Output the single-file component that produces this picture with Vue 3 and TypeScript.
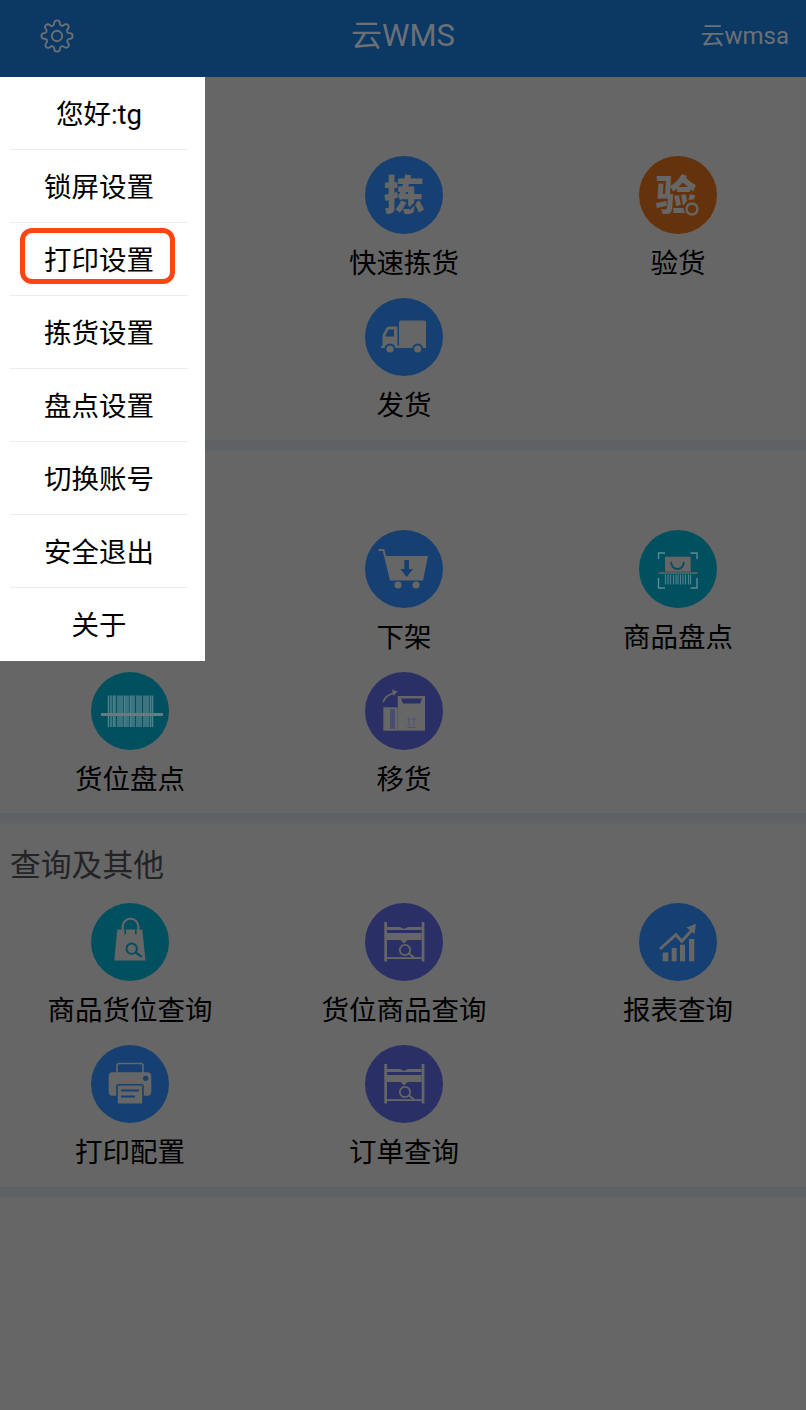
<script setup lang="ts">
interface Item { label: string; icon: string; color: string }
interface Section { title: string; items: Item[] }

const BLUE = '#154071'
const ORANGE = '#64320b'
const TEAL = '#00505f'
const INDIGO = '#2a3066'
// Cells that the open menu covers in the reference stay empty.
const HIDDEN: Item = { label: '', icon: '', color: 'transparent' }

const sections: Section[] = [
  {
    title: '',
    items: [
      HIDDEN,
      { label: '快速拣货', icon: 'pick', color: BLUE },
      { label: '验货', icon: 'check', color: ORANGE },
      HIDDEN,
      { label: '发货', icon: 'truck', color: BLUE },
    ],
  },
  {
    title: '',
    items: [
      HIDDEN,
      { label: '下架', icon: 'cart', color: BLUE },
      { label: '商品盘点', icon: 'scan', color: TEAL },
      { label: '货位盘点', icon: 'barcode', color: TEAL },
      { label: '移货', icon: 'move', color: INDIGO },
    ],
  },
  {
    title: '查询及其他',
    items: [
      { label: '商品货位查询', icon: 'bag', color: TEAL },
      { label: '货位商品查询', icon: 'shelf', color: INDIGO },
      { label: '报表查询', icon: 'chart', color: BLUE },
      { label: '打印配置', icon: 'printer', color: BLUE },
      { label: '订单查询', icon: 'shelf', color: INDIGO },
    ],
  },
]

const menu: string[] = ['您好:tg', '锁屏设置', '打印设置', '拣货设置', '盘点设置', '切换账号', '安全退出', '关于']
const bars: number[] = [17.5, 20, 22.5, 24, 27, 29, 31, 33.5, 35, 37, 39.5, 41, 43, 46, 48, 50, 53, 55, 57, 59.5, 61.5]
</script>

<template>
  <div class="page">
    <header class="top">
      <svg class="gear" viewBox="0 0 24 24" fill="none" stroke="#6b7076" stroke-width="1.3" stroke-linejoin="round">
        <circle cx="12" cy="12" r="3.7" />
        <path d="M19.4 15a1.65 1.65 0 0 0 .33 1.82l.06.06a2 2 0 1 1-2.83 2.83l-.06-.06a1.65 1.65 0 0 0-2.82 1.17V21a2 2 0 0 1-4 0v-.09a1.65 1.65 0 0 0-2.82-1.17l-.06.06a2 2 0 1 1-2.83-2.83l.06-.06A1.65 1.65 0 0 0 3.09 14H3a2 2 0 0 1 0-4h.09a1.65 1.65 0 0 0 1.17-2.82l-.06-.06a2 2 0 1 1 2.83-2.83l.06.06A1.65 1.65 0 0 0 10 3.09V3a2 2 0 0 1 4 0v.09a1.65 1.65 0 0 0 2.82 1.17l.06-.06a2 2 0 1 1 2.83 2.83l-.06.06A1.65 1.65 0 0 0 20.91 10H21a2 2 0 0 1 0 4h-.09a1.65 1.65 0 0 0-1.51 1z" />
      </svg>
      <span class="title">云WMS</span>
      <span class="user">云wmsa</span>
    </header>

    <section v-for="(s, si) in sections" :key="si" class="section">
      <h2 class="section-title">{{ s.title }}</h2>
      <div class="grid">
        <div v-for="(it, ii) in s.items" :key="ii" class="cell">
          <svg v-if="it.icon" class="icon" viewBox="0 0 78 78">
            <circle cx="39" cy="39" r="39" :fill="it.color" />

            <g v-if="it.icon === 'pick'">
              <text x="39" y="54" class="glyph" text-anchor="middle">拣</text>
              <path d="M41 49l4 3.5 6-6.5" fill="none" :stroke="it.color" stroke-width="2.2" />
            </g>

            <g v-else-if="it.icon === 'check'">
              <text x="37" y="54" class="glyph" text-anchor="middle">验</text>
              <circle cx="53" cy="52" r="8.5" :fill="it.color" />
              <circle cx="53" cy="53" r="5.5" fill="none" stroke="#666" stroke-width="2.4" />
            </g>

            <g v-else-if="it.icon === 'truck'" fill="#666">
              <rect x="34" y="22.5" width="27" height="26.5" rx="2" />
              <path d="M32.5 28.5H24q-2 0-3 2L17.5 37v11H16v2h16.5z" />
              <path d="M23.5 31.5h5.5v7H20z" :fill="it.color" />
              <rect x="32" y="47.5" width="29" height="2.5" />
              <circle cx="25" cy="51" r="5.5" :fill="it.color" />
              <circle cx="25" cy="51" r="3.6" />
              <circle cx="52.7" cy="51" r="5.5" :fill="it.color" />
              <circle cx="52.7" cy="51" r="3.6" />
            </g>

            <g v-else-if="it.icon === 'cart'" fill="#666">
              <path d="M13.5 20H18.5L20 26" fill="none" stroke="#666" stroke-width="2" />
              <path d="M19 26H63L58 50.5H25z" />
              <circle cx="33" cy="55" r="3.6" />
              <circle cx="51" cy="55" r="3.6" />
              <path d="M39.3 30H44V39H47.9L41.7 47 35.3 39H39.3z" :fill="it.color" />
            </g>

            <g v-else-if="it.icon === 'scan'" fill="#666">
              <path d="M19.5 29V23H26M51.5 23H58V29M19.5 48V58H26M51.5 58H58V48" fill="none" stroke="#5d8a92" stroke-width="1.4" />
              <rect x="26" y="26.7" width="25.7" height="15" />
              <path d="M32 32q1 7 6.5 7t6.5-7" fill="none" :stroke="it.color" stroke-width="1.8" />
              <rect x="19.5" y="42.3" width="39" height="1.5" />
              <path d="M26.5 44.5v10M29 44.5v10M31.5 44.5v10M34.5 44.5v10M37 44.5v10M39 44.5v10M41.5 44.5v10M44 44.5v10M46.5 44.5v10M49.5 44.5v10M51.5 44.5v10" stroke="#4d8088" stroke-width="1.2" />
            </g>

            <g v-else-if="it.icon === 'barcode'">
              <path
                v-for="x in bars"
                :key="x"
                :d="`M${x} 23.5V55`"
                stroke="#4f8088"
                stroke-width="1.5"
              />
              <rect x="10" y="41" width="62" height="3" fill="#6a7a7e" />
            </g>

            <g v-else-if="it.icon === 'move'">
              <rect x="32.7" y="24" width="27.3" height="34.7" fill="#666" />
              <path d="M36 26.5H57L55 31.5H38z" :fill="it.color" />
              <rect x="18.3" y="35.3" width="14.4" height="23.4" fill="#666" />
              <rect x="25" y="37" width="5" height="20" fill="#4a4d73" />
              <path d="M18 30q3-7 11-9" fill="none" stroke="#666" stroke-width="1.8" />
              <path d="M27 17.5L32.5 19.5 28.5 24z" fill="#666" />
              <path d="M44 54v-8m-1.8 2l1.8-2 1.8 2M49 54v-8m-1.8 2l1.8-2 1.8 2M42 55.5h9" fill="none" stroke="#4f5278" stroke-width="1" />
            </g>

            <g v-else-if="it.icon === 'bag'">
              <path d="M31.7 28V23.5a7.8 7.8 0 0 1 15.6 0V28" fill="none" stroke="#666" stroke-width="2.2" />
              <path d="M26.3 26.5H51.3L54.5 57.5H23.3z" fill="#666" />
              <path d="M34.2 26.5v5M44.8 26.5v5" :stroke="it.color" stroke-width="1.6" />
              <circle cx="40.7" cy="45.7" r="5.2" fill="none" :stroke="it.color" stroke-width="2" />
              <path d="M44.7 49.5l6 4.3" :stroke="it.color" stroke-width="2.2" />
            </g>

            <g v-else-if="it.icon === 'shelf'" fill="#666">
              <rect x="19.3" y="19" width="2.7" height="39.5" />
              <rect x="56.7" y="19" width="2.7" height="39.5" />
              <path d="M22 24h13l4 2 4-2h13.7v3H22z" />
              <rect x="22" y="30" width="34.7" height="7" />
              <path d="M35.5 37h7L39 40.5z" />
              <rect x="22" y="54.2" width="34.7" height="1.8" />
              <circle cx="40" cy="47" r="5.2" fill="none" stroke="#666" stroke-width="1.8" />
              <path d="M44 50.5l5 4" fill="none" stroke="#666" stroke-width="1.8" />
            </g>

            <g v-else-if="it.icon === 'chart'" fill="#666">
              <rect x="23.7" y="49.5" width="5.6" height="8.8" />
              <rect x="32.7" y="45" width="5" height="13.3" />
              <rect x="41" y="41.7" width="5" height="16.6" />
              <rect x="50" y="36" width="5.3" height="22.3" />
              <path d="M21 46L37 31.7l5.7 6.6L54 26" fill="none" stroke="#666" stroke-width="3" />
              <path d="M47.5 24.5L57 20.7 55.5 31z" />
            </g>

            <g v-else-if="it.icon === 'printer'">
              <rect x="26" y="18.5" width="26" height="10" rx="2" fill="none" stroke="#666" stroke-width="1.6" />
              <rect x="17.7" y="27.3" width="42.6" height="23.4" rx="4" fill="#666" />
              <circle cx="54.7" cy="33.3" r="2.6" :fill="it.color" />
              <rect x="26" y="39.7" width="26" height="19.5" rx="1.5" fill="#666" :stroke="it.color" stroke-width="1.6" />
              <path d="M30 45.5h18M30 51.5h14" :stroke="it.color" stroke-width="1.8" />
            </g>
          </svg>
          <span v-if="it.label" class="label">{{ it.label }}</span>
        </div>
      </div>
    </section>

    <aside class="menu">
      <div v-for="(m, i) in menu" :key="m" class="menu-row">
        <span class="menu-text">{{ m }}</span>
        <span v-if="i === 2" class="mark"></span>
      </div>
    </aside>
  </div>
</template>

<style scoped>
.page {
  position: relative;
  width: 806px;
  height: 1410px;
  overflow: hidden;
  background: #666;
  font-family: Roboto, "Noto Sans CJK SC", sans-serif;
  color: #000;
}
.top {
  height: 77px;
  box-sizing: border-box;
  padding-bottom: 5px;
  background: #0c3964;
  color: #6b7076;
  display: grid;
  grid-template-columns: 1fr auto 1fr;
  align-items: center;
}
.gear { width: 34px; height: 34px; margin-left: 40px; }
.title { font-size: 31px; line-height: 38px; margin-bottom: 1px; }
.user { font-size: 24px; line-height: 30px; margin-bottom: 1px; margin-right: 17px; justify-self: end; }
.section {
  height: 362.5px;
  margin-bottom: 11px;
  box-sizing: border-box;
  box-shadow: 0 10.5px 0 #5f6264;
}
.section-title {
  margin: 0;
  height: 79px;
  padding: 24px 0 0 10px;
  box-sizing: border-box;
  font-size: 30.8px;
  line-height: 36px;
  font-weight: 400;
  color: #222426;
}
.grid {
  display: grid;
  grid-template-columns: repeat(3, 274px);
  grid-auto-rows: 142px;
  margin-left: -7px;
}
.cell {
  display: flex;
  flex-direction: column;
  align-items: center;
}
.icon { width: 78px; height: 78px; display: block; }
.glyph {
  font-family: "Noto Sans CJK SC", sans-serif;
  font-size: 41px;
  font-weight: 900;
  fill: #666;
}
.label {
  margin-top: 11px;
  font-size: 27.5px;
  line-height: 38px;
  white-space: nowrap;
  color: #000;
}
.menu {
  position: absolute;
  left: 0;
  top: 77px;
  width: 205px;
  height: 584px;
  background: #fff;
  display: flex;
  flex-direction: column;
}
.menu-row {
  position: relative;
  height: 73px;
  box-sizing: border-box;
  padding-bottom: 2px;
  margin: 0 17px 0 10px;
  display: flex;
  align-items: center;
  justify-content: center;
  border-bottom: 1px solid #ececec;
}
.menu-row:last-child { border-bottom: 0; flex: 1; padding-bottom: 4px; }
.menu-text { font-size: 27.5px; color: #000; }
.mark {
  position: absolute;
  left: 9.5px;
  top: 5px;
  width: 155px;
  height: 56px;
  box-sizing: border-box;
  border: 5.5px solid #fc4512;
  border-radius: 12px;
}
</style>
